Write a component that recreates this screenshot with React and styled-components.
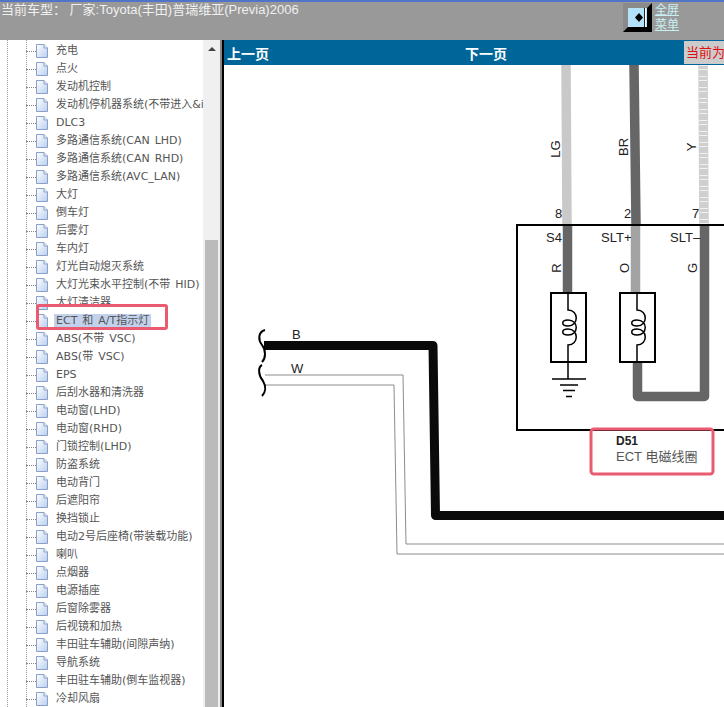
import styled, { createGlobalStyle } from "styled-components";

const items = [
    "充电", "点火", "发动机控制", "发动机停机器系统(不带进入&i", "DLC3",
    "多路通信系统(CAN LHD)", "多路通信系统(CAN RHD)", "多路通信系统(AVC_LAN)",
    "大灯", "倒车灯", "后雾灯", "车内灯", "灯光自动熄灭系统", "大灯光束水平控制(不带 HID)",
    "大灯清洁器", "ECT 和 A/T指示灯", "ABS(不带 VSC)", "ABS(带 VSC)", "EPS",
    "后刮水器和清洗器", "电动窗(LHD)", "电动窗(RHD)", "门锁控制(LHD)", "防盗系统",
    "电动背门", "后遮阳帘", "换挡锁止", "电动2号后座椅(带装载功能)", "喇叭", "点烟器",
    "电源插座", "后窗除雾器", "后视镜和加热", "丰田驻车辅助(间隙声纳)", "导航系统",
    "丰田驻车辅助(倒车监视器)", "冷却风扇",
];
const SELECTED = "ECT 和 A/T指示灯";

const labels = [
    { x: 555, y: 218, t: "8" }, { x: 624, y: 218, t: "2" }, { x: 692, y: 218, t: "7" },
    { x: 546, y: 242, t: "S4" }, { x: 601, y: 242, t: "SLT+" }, { x: 670, y: 242, t: "SLT–" },
    { x: 292, y: 339, t: "B" }, { x: 291, y: 373, t: "W" },
];
const sideLabels = [
    { x: 560, y: 149, t: "LG" }, { x: 628, y: 147, t: "BR" }, { x: 696, y: 147, t: "Y" },
    { x: 561, y: 268, t: "R" }, { x: 629, y: 268, t: "O" }, { x: 697, y: 268, t: "G" },
];

function PageIcon() {
    return (
        <PageGlyph width="12" height="14" viewBox="0 0 12 14">
            <defs>
                <linearGradient id="pageFill" x1="0" y1="0" x2="1" y2="1">
                    <stop offset="0" stopColor="#ffffff" />
                    <stop offset="1" stopColor="#b9cff0" />
                </linearGradient>
            </defs>
            <path d="M0.5 0.5H8L11.5 4V13.5H0.5Z" fill="url(#pageFill)" stroke="#8aa0c8" />
            <path d="M8 0.5V4H11.5" fill="#e8f0fb" stroke="#8aa0c8" />
        </PageGlyph>
    );
}

function Coil({ x }) {
    return (
        <g>
            <BoxLine as="rect" x={x - 17} y="293" width="35" height="69" />
            <CoilLine d={`M${x} 293V310C${x + 11} 310 ${x + 11} 326 ${x} 326C${x - 7} 326 ${x - 7} 320 ${x} 320C${x + 11} 320 ${x + 11} 335 ${x} 335C${x - 7} 335 ${x - 7} 329 ${x} 329C${x + 11} 329 ${x + 11} 345 ${x} 345V362`} />
        </g>
    );
}

function Diagram() {
    return (
        <DiagramSvg viewBox="224 65 500 642">
            <Wire d="M566 65L567 224" $tone="#c9c9c9" />
            <Wire d="M634 65L636 224" $tone="#666666" />
            <Wire d="M703 65L704 224" $tone="#cfcfcf" />
            <Speckle d="M703 65L704 224" />
            <Wire d="M567.5 226V293" $tone="#666666" />
            <Wire d="M635.5 226V293" $tone="#a3a3a3" />
            <Wire d="M704.5 226V396.5H637.5V362" $tone="#666666" />
            <BoxLine as="path" d="M724 225H517V430H724" />
            <Coil x={568} />
            <Coil x={637} />
            <CoilLine d="M568 362V379M552 379H586M560 385H578M563 390.500H575M566 396.500H572" />
            <Trunk d="M264 345.500H433L435.500 515.500H724" />
            <Thin d="M265 375H403L406 544H724" />
            <Thin d="M265 385H394L397 554H724" />
            <BraceLine d="M265 330C258 332 258 340 262 345C266 350 266 358 262 362" />
            <BraceLine d="M262 365C258 367 258 375 263 381C266 386 266 392 262 396" />
            {labels.map((l) => (
                <Mark key={l.t} x={l.x} y={l.y}>{l.t}</Mark>
            ))}
            {sideLabels.map((l) => (
                <Mark key={l.t} x={l.x} y={l.y} textAnchor="middle" transform={`rotate(-90 ${l.x} ${l.y})`}>{l.t}</Mark>
            ))}
            <Callout x="591" y="429" width="122" height="45" rx="3" />
            <NoteTitle x="616" y="445">D51</NoteTitle>
            <Note x="616" y="461">ECT 电磁线圈</Note>
        </DiagramSvg>
    );
}

export default function App() {
    return (
        <Page>
            <Global />
            <Header>
                <CarTitle>当前车型： 厂家:Toyota(丰田)普瑞维亚(Previa)2006</CarTitle>
                <MenuToggle>
                    <ToggleButton>
                        <svg width="19" height="19" viewBox="0 0 19 19">
                            <rect width="19" height="19" fill="#b5e2fb" />
                            <path d="M11 5L15 9.500L11 14L7 9.500Z" fill="#000" />
                            <path d="M16.500 0V19" stroke="#222" />
                            <path d="M17.500 0V19" stroke="#fff" />
                        </svg>
                    </ToggleButton>
                    <ToggleLabel>全屏<br />菜单</ToggleLabel>
                </MenuToggle>
            </Header>
            <Body>
                <Sidebar>
                    <Tree>
                        {items.map((name) => (
                            <Row key={name}>
                                <Connector />
                                <PageIcon />
                                <Label $selected={name === SELECTED}>{name}</Label>
                                {name === SELECTED && <RowMarker />}
                            </Row>
                        ))}
                    </Tree>
                    <ScrollTrack>
                        <ScrollArrow />
                        <ScrollThumb />
                    </ScrollTrack>
                </Sidebar>
                <Main>
                    <Pager>
                        <PrevLink>上一页</PrevLink>
                        <NextLink>下一页</NextLink>
                        <CurrentPage>当前为</CurrentPage>
                    </Pager>
                    <Diagram />
                </Main>
            </Body>
        </Page>
    );
}

const Global = createGlobalStyle`
    html, body {
        margin: 0;
        padding: 0;
        background: #ffffff;
    }
`
const Page = styled.div`
    width: 724px;
    height: 707px;
    display: flex;
    flex-direction: column;
    overflow: hidden;
    font-family: "Liberation Sans", "Noto Sans CJK SC", sans-serif;
`
const Header = styled.header`
    height: 38px;
    flex: none;
    display: flex;
    justify-content: space-between;
    background-color: #999999;
    border-top: 2px solid #4f74c8;
`
const CarTitle = styled.div`
    font-size: 13px;
    line-height: 16px;
    color: #f0f0f0;
    padding-left: 1px;
    white-space: pre;
`
const MenuToggle = styled.div`
    display: flex;
    gap: 3px;
    padding-top: 1px;
    margin-right: 45px;
`
const ToggleButton = styled.div`
    width: 19px;
    height: 19px;
    display: flex;
    background-color: #888888;
    border-style: solid;
    border-width: 5px;
    border-color: #8a8a8a #000000 #000000 #8a8a8a;
    box-shadow: inset 1px 1px 0 #444444;
`
const ToggleLabel = styled.div`
    font-size: 12px;
    line-height: 15px;
    color: #c8f0f4;
    text-decoration: underline;
`
const Body = styled.div`
    flex: 1;
    display: flex;
    min-height: 0;
`
const Sidebar = styled.aside`
    width: 220px;
    flex: none;
    display: flex;
    border-right: 2px solid #888888;
`
const Tree = styled.div`
    width: 203px;
    flex: none;
    padding: 2px 0 0 26px;
    box-sizing: border-box;
    overflow: hidden;
    background-color: #ffffff;
    background-image: linear-gradient(#999999 50%, transparent 50%), linear-gradient(#999999 50%, transparent 50%);
    background-size: 1px 2px;
    background-repeat: repeat-y;
    background-position: 7px 0, 26px 0;
`
const Row = styled.div`
    position: relative;
    height: 18px;
    display: flex;
    align-items: center;
    white-space: nowrap;
`
const Connector = styled.span`
    width: 10px;
    flex: none;
    border-top: 1px dotted #888888;
`
const PageGlyph = styled.svg`
    flex: none;
`
const Label = styled.span`
    margin-left: 6px;
    padding: 0 2px;
    font-family: "DejaVu Sans", "Noto Sans CJK SC", sans-serif;
    font-size: 11px;
    line-height: 14px;
    word-spacing: 1.5px;
    color: #555555;
    background-color: ${props => props.$selected ? "#c2d2ec" : "transparent"};
`
const RowMarker = styled.span`
    position: absolute;
    left: 10px;
    top: -8px;
    width: 126px;
    height: 20px;
    border: 3px solid #ea5a70;
    border-radius: 3px;
`
const ScrollTrack = styled.div`
    width: 17px;
    flex: none;
    display: flex;
    flex-direction: column;
    align-items: center;
    background-color: #f0f0f0;
`
const ScrollArrow = styled.div`
    margin-top: 7px;
    border-left: 4px solid transparent;
    border-right: 4px solid transparent;
    border-bottom: 4px solid #444444;
`
const ScrollThumb = styled.div`
    width: 13px;
    flex: 1;
    margin-top: 189px;
    background-color: #bbbbbb;
`
const Main = styled.main`
    flex: 1;
    min-width: 0;
    display: flex;
    flex-direction: column;
    border-left: 2px solid #000000;
`
const Pager = styled.nav`
    height: 25px;
    flex: none;
    display: flex;
    align-items: center;
    background-color: #006699;
`
const PrevLink = styled.a`
    width: 238px;
    padding-left: 3px;
    flex: none;
    font-size: 14px;
    font-weight: 700;
    color: #ffffff;
`
const NextLink = styled(PrevLink)`
    width: 219px;
    padding-left: 0;
`
const CurrentPage = styled.div`
    flex: 1;
    height: 23px;
    font-size: 13px;
    line-height: 23px;
    padding-left: 2px;
    white-space: nowrap;
    overflow: hidden;
    color: #e01010;
    background-color: #cccccc;
`
const DiagramSvg = styled.svg`
    flex: 1;
    width: 100%;
    min-height: 0;
    display: block;
    background-color: #ffffff;
`
const Wire = styled.path`
    fill: none;
    stroke: ${props => props.$tone};
    stroke-width: 9.5;
    stroke-linejoin: round;
`
const Speckle = styled.path`
    fill: none;
    stroke: #ffffff;
    stroke-width: 8;
    stroke-dasharray: 1 3 1 6;
    opacity: 0.7;
`
const Trunk = styled.path`
    fill: none;
    stroke: #0a0a0a;
    stroke-width: 9;
    stroke-linejoin: round;
`
const Thin = styled.path`
    fill: none;
    stroke: #8c8c8c;
    stroke-width: 1;
`
const BoxLine = styled.rect`
    fill: none;
    stroke: #000000;
    stroke-width: 2;
`
const CoilLine = styled.path`
    fill: none;
    stroke: #000000;
    stroke-width: 1.500;
`
const BraceLine = styled.path`
    fill: none;
    stroke: #000000;
    stroke-width: 2;
`
const Mark = styled.text`
    font-family: "Liberation Sans", sans-serif;
    font-size: 13px;
    fill: #222222;
`
const NoteTitle = styled.text`
    font-family: "Liberation Sans", sans-serif;
    font-size: 12px;
    font-weight: 700;
    fill: #222222;
`
const Note = styled.text`
    font-family: "Liberation Sans", "Noto Sans CJK SC", sans-serif;
    font-size: 13px;
    fill: #555555;
`
const Callout = styled.rect`
    fill: none;
    stroke: #ea5a70;
    stroke-width: 3;
`
